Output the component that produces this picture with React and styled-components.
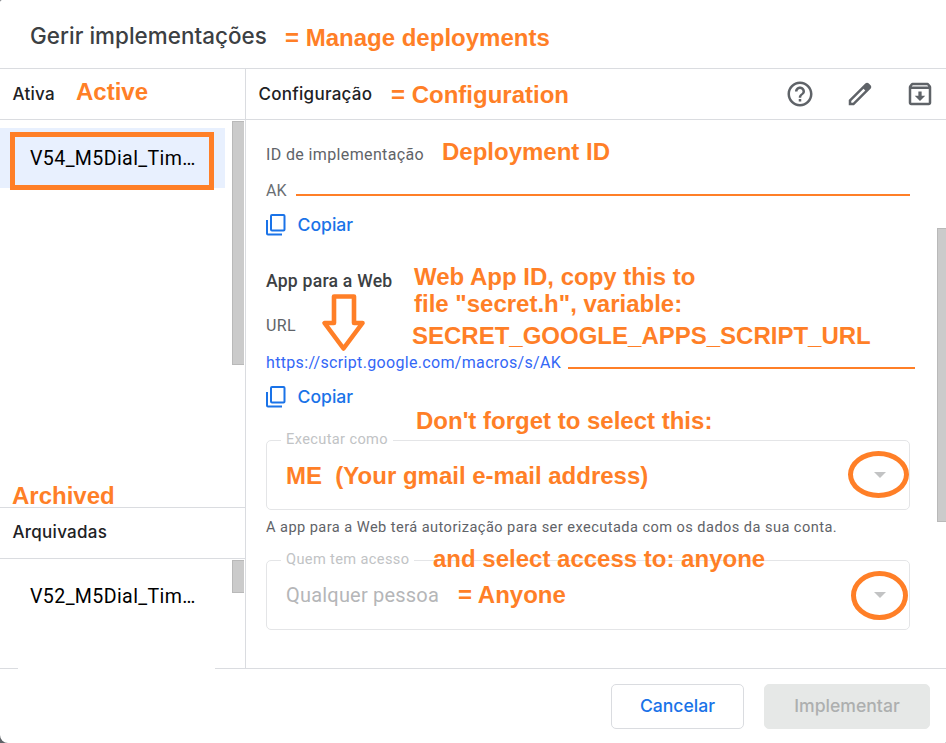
import React from "react";
import styled, { createGlobalStyle } from "styled-components";

const ORANGE = "#ff7f27";
const LINE = "#dadce0";
const BLUE = "#1a73e8";
const PRODUCT_FONT = `Inter, "Open Sans", sans-serif`;

const GlobalStyle = createGlobalStyle`
  * { box-sizing: border-box; }
  body { margin: 0; background: #5f6368; font-family: Roboto, sans-serif; overflow: hidden; }
  h1, h2, h3, p { margin: 0; }
`;

const Dialog = styled.div`
  position: relative;
  display: flex;
  flex-direction: column;
  width: 946px;
  height: 743px;
  background: #fff;
  border-radius: 2px 0 1px 8px;
  overflow: hidden;
`;

const Header = styled.header`
  flex: none;
  height: 69px;
  padding: 19px 30px 0;
  border-bottom: 1px solid ${LINE};
`;

const Title = styled.h1`
  font: 450 22.4px/34px ${PRODUCT_FONT};
  letter-spacing: 0.05px;
  color: #3c4043;
  white-space: nowrap;
`;

const Columns = styled.div`
  display: flex;
  height: 599px;
`;

const Sidebar = styled.aside`
  flex: none;
  display: flex;
  flex-direction: column;
  width: 246px;
  border-right: 1px solid ${LINE};
`;

const ColumnHeader = styled.div`
  flex: none;
  display: flex;
  align-items: center;
  justify-content: space-between;
  height: ${(p) => (p.$divided ? 52 : 51)}px;
  padding: 0 11px ${(p) => (p.$divided ? 2 : 0)}px 12.5px;
  border-top: ${(p) => (p.$divided ? `1px solid ${LINE}` : "none")};
  border-bottom: 1px solid ${LINE};
`;

const ColumnTitle = styled.h2`
  font: 500 17px/24px ${PRODUCT_FONT};
  letter-spacing: 0.27px;
  color: #202124;
  white-space: nowrap;
`;

const List = styled.div`
  display: flex;
  justify-content: space-between;
  height: ${(p) => p.$height}px;
  padding: 1px 1px 0 0;
`;

const ListItem = styled.div`
  width: 225px;
  height: 60px;
  margin-top: 7px;
  padding-left: 30px;
  background: ${(p) => (p.$selected ? "#e8f0fe" : "transparent")};
  font-size: 19.6px;
  line-height: ${(p) => (p.$selected ? 62 : 60)}px;
  letter-spacing: 0.38px;
  color: #000;
  white-space: nowrap;
`;

const ScrollThumb = styled.div`
  flex: none;
  width: ${(p) => p.$width}px;
  height: ${(p) => p.$height}px;
  margin-top: ${(p) => p.$top || 0}px;
  background: #cbcbcb;
  border: 1px solid #b9b9b9;
  border-right: none;
`;

const Main = styled.main`
  flex: 1;
  min-width: 0;
`;

const IconBar = styled.div`
  display: flex;
  gap: 30px;
  color: #5f6368;
  svg { width: 30px; height: 30px; fill: currentColor; }
`;

const Scroller = styled.div`
  display: flex;
  justify-content: space-between;
`;

const Details = styled.div`
  display: flex;
  flex-direction: column;
  align-items: flex-start;
  width: 664px;
  padding: 25px 0 0 20px;
`;

const Label = styled.p`
  height: 20px;
  margin-top: ${(p) => p.$gap || 0}px;
  font-size: 16px;
  line-height: 20px;
  letter-spacing: 0.37px;
  color: #5f6368;
  white-space: nowrap;
`;

const SectionTitle = styled.h3`
  margin-top: 34px;
  font-size: 17.6px;
  font-weight: 500;
  line-height: 20px;
  letter-spacing: 0.23px;
  color: #3c4043;
`;

const Value = styled.div`
  height: 20px;
  margin-top: ${(p) => p.$gap}px;
  font-size: 16px;
  line-height: 20px;
  letter-spacing: ${(p) => (p.$link ? 0.33 : 0)}px;
  color: ${(p) => (p.$link ? "#3367f6" : "#6a6e73")};
  white-space: nowrap;
`;

const CopyButton = styled.button`
  display: flex;
  align-items: center;
  gap: 11.5px;
  height: 24px;
  margin-top: 12px;
  padding: 0;
  border: none;
  background: none;
  font: 500 17.6px/24px ${PRODUCT_FONT};
  color: ${BLUE};
  svg { width: 20px; height: 22px; fill: none; stroke: currentColor; stroke-width: 2; }
`;

const Select = styled.div`
  position: relative;
  display: flex;
  align-items: center;
  justify-content: space-between;
  width: 644px;
  height: 70px;
  margin-top: ${(p) => p.$gap}px;
  padding: 0 23px 0 19px;
  border: 1px solid #e4e5e7;
  border-radius: 5px;
`;

const FloatingLabel = styled.span`
  position: absolute;
  left: 14px;
  top: -11px;
  padding: 0 5px;
  background: #fff;
  font-size: 14.6px;
  line-height: 18px;
  letter-spacing: 0.37px;
  color: #c1c3c5;
  white-space: nowrap;
`;

const SelectValue = styled.span`
  font-size: 20px;
  letter-spacing: 0.2px;
  color: #b5b6b8;
`;

const Caret = styled.span`
  width: 0;
  border: 6px solid transparent;
  border-top-color: #c2c3c4;
  border-bottom: none;
`;

const Hint = styled.p`
  margin-top: 7px;
  font-size: 14.6px;
  line-height: 20px;
  letter-spacing: 0.44px;
  color: #5f6368;
  white-space: nowrap;
`;

const Footer = styled.footer`
  display: flex;
  flex-direction: column;
  height: 75px;
`;

const FooterRule = styled.div`
  display: flex;
  justify-content: space-between;
  &::before, &::after { content: ""; height: 1px; background: ${LINE}; }
  &::before { width: 18px; }
  &::after { width: 731px; }
`;

const Actions = styled.div`
  display: flex;
  justify-content: flex-end;
  gap: 20px;
  padding: 15px 16px 0;
`;

const Button = styled.button`
  width: ${(p) => p.$width}px;
  height: 45px;
  padding: 0 0 2px;
  border: 1px solid ${(p) => (p.disabled ? "#e6e8e7" : LINE)};
  border-radius: 5px;
  background: ${(p) => (p.disabled ? "#e6e8e7" : "#fff")};
  font: 500 17.6px/24px ${PRODUCT_FONT};
  color: ${(p) => (p.disabled ? "#adafaf" : BLUE)};
`;

/* Hand-made notes lying over the dialog */
const Note = styled.span`
  position: absolute;
  left: ${(p) => p.$x}px;
  top: ${(p) => p.$y}px;
  font: 700 24px/24px "Liberation Sans", Arial, sans-serif;
  color: ${ORANGE};
  white-space: pre;
`;

const Underline = styled.span`
  position: absolute;
  left: ${(p) => p.$x}px;
  top: ${(p) => p.$y}px;
  width: ${(p) => p.$width}px;
  height: 2px;
  background: ${ORANGE};
`;

const Ring = styled.span`
  position: absolute;
  left: ${(p) => p.$x}px;
  top: ${(p) => p.$y}px;
  width: ${(p) => p.$width}px;
  height: ${(p) => p.$height}px;
  border: 5px solid ${ORANGE};
  border-radius: ${(p) => (p.$square ? 0 : "50%")};
`;

const Pointer = styled.svg`
  position: absolute;
  left: 320px;
  top: 292px;
  fill: #fff;
  stroke: ${ORANGE};
  stroke-width: 4.6;
  stroke-linejoin: round;
`;

const CopyIcon = () => (
  <svg viewBox="0 0 20 22">
    <rect x="5" y="1" width="13.500" height="15.500" rx="1" />
    <path d="M1 6v13.500a1 1 0 0 0 1 1H16" />
  </svg>
);

const HelpIcon = () => (
  <svg viewBox="0 0 24 24">
    <path d="M11 18h2v-2h-2v2zm1-16C6.48 2 2 6.48 2 12s4.48 10 10 10 10-4.48 10-10S17.52 2 12 2zm0 18c-4.41 0-8-3.59-8-8s3.59-8 8-8 8 3.59 8 8-3.59 8-8 8zm0-14c-2.21 0-4 1.79-4 4h2c0-1.1.9-2 2-2s2 .9 2 2c0 2-3 1.75-3 5h2c0-2.25 3-2.5 3-5 0-2.21-1.79-4-4-4z" />
  </svg>
);

const PencilIcon = () => (
  <svg viewBox="0 0 24 24">
    <path d="M20.41 4.94l-1.35-1.35c-.78-.78-2.05-.78-2.83 0L3 16.82V21h4.18L20.41 7.77c.79-.78.79-2.05 0-2.83zM6.41 19.06L5 19v-1.36l9.82-9.82 1.41 1.41z" />
  </svg>
);

const ArchiveIcon = () => (
  <svg viewBox="0 0 24 24">
    <path
      fillRule="evenodd"
      d="M20.500 5.200l-1.400-1.700C18.900 3.200 18.500 3 18 3H6c-.5 0-.9.2-1.200.5L3.500 5.200C3.200 5.600 3 6 3 6.500V19c0 1.100.9 2 2 2h14c1.100 0 2-.9 2-2V6.500c0-.5-.2-.9-.5-1.300zM6.200 5h11.600l.8 1H5.400zM5 19V8h14v11z"
    />
    <path d="M16.200 13.300h-2.900V10h-2.600v3.300H7.800l4.200 4.200z" />
  </svg>
);

export default function App() {
  return (
    <Dialog>
      <GlobalStyle />
      <Header>
        <Title>Gerir implementações</Title>
      </Header>
      <Columns>
        <Sidebar>
          <ColumnHeader>
            <ColumnTitle>Ativa</ColumnTitle>
          </ColumnHeader>
          <List $height={387}>
            <ListItem $selected>V54_M5Dial_Tim…</ListItem>
            <ScrollThumb $width={12} $height={244} />
          </List>
          <ColumnHeader $divided>
            <ColumnTitle>Arquivadas</ColumnTitle>
          </ColumnHeader>
          <List $height={109}>
            <ListItem>V52_M5Dial_Tim…</ListItem>
            <ScrollThumb $width={12} $height={33} />
          </List>
        </Sidebar>
        <Main>
          <ColumnHeader>
            <ColumnTitle>Configuração</ColumnTitle>
            <IconBar>
              <HelpIcon />
              <PencilIcon />
              <ArchiveIcon />
            </IconBar>
          </ColumnHeader>
          <Scroller>
            <Details>
              <Label>ID de implementação</Label>
              <Value $gap={16}>AK</Value>
              <CopyButton>
                <CopyIcon />
                Copiar
              </CopyButton>
              <SectionTitle>App para a Web</SectionTitle>
              <Label $gap={25}>URL</Label>
              <Value $link $gap={17}>https://script.google.com/macros/s/AK</Value>
              <CopyButton>
                <CopyIcon />
                Copiar
              </CopyButton>
              <Select $gap={31}>
                <FloatingLabel>Executar como</FloatingLabel>
                <SelectValue />
                <Caret />
              </Select>
              <Hint>
                A app para a Web terá autorização para ser executada com os dados da sua conta.
              </Hint>
              <Select $gap={23}>
                <FloatingLabel>Quem tem acesso</FloatingLabel>
                <SelectValue>Qualquer pessoa</SelectValue>
                <Caret />
              </Select>
            </Details>
            <ScrollThumb $width={9} $height={294} $top={108} />
          </Scroller>
        </Main>
      </Columns>
      <Footer>
        <FooterRule />
        <Actions>
          <Button $width={133}>Cancelar</Button>
          <Button $width={166} disabled>Implementar</Button>
        </Actions>
      </Footer>

      <Note $x={285} $y={26}>= Manage deployments</Note>
      <Note $x={76} $y={80}>Active</Note>
      <Note $x={391} $y={83}>= Configuration</Note>
      <Note $x={442} $y={140}>Deployment ID</Note>
      <Note $x={414} $y={265}>Web App ID, copy this to</Note>
      <Note $x={414} $y={292}>file "secret.h", variable:</Note>
      <Note $x={412} $y={324}>SECRET_GOOGLE_APPS_SCRIPT_URL</Note>
      <Note $x={416} $y={409}>Don't forget to select this:</Note>
      <Note $x={286} $y={464}>ME  (Your gmail e-mail address)</Note>
      <Note $x={12} $y={484}>Archived</Note>
      <Note $x={433} $y={547}>and select access to: anyone</Note>
      <Note $x={458} $y={583}>= Anyone</Note>
      <Underline $x={296} $y={194} $width={614} />
      <Underline $x={568} $y={367} $width={347} />
      <Ring $square $x={10} $y={132} $width={204} $height={58} />
      <Ring $x={848} $y={451} $width={61} $height={47} />
      <Ring $x={851} $y={571} $width={57} $height={49} />
      <Pointer width="48" height="62" viewBox="0 0 48 62">
        <path d="M14 4.500h20V31h8.500L23.500 56.500 4.500 31H14z" />
      </Pointer>
    </Dialog>
  );
}
